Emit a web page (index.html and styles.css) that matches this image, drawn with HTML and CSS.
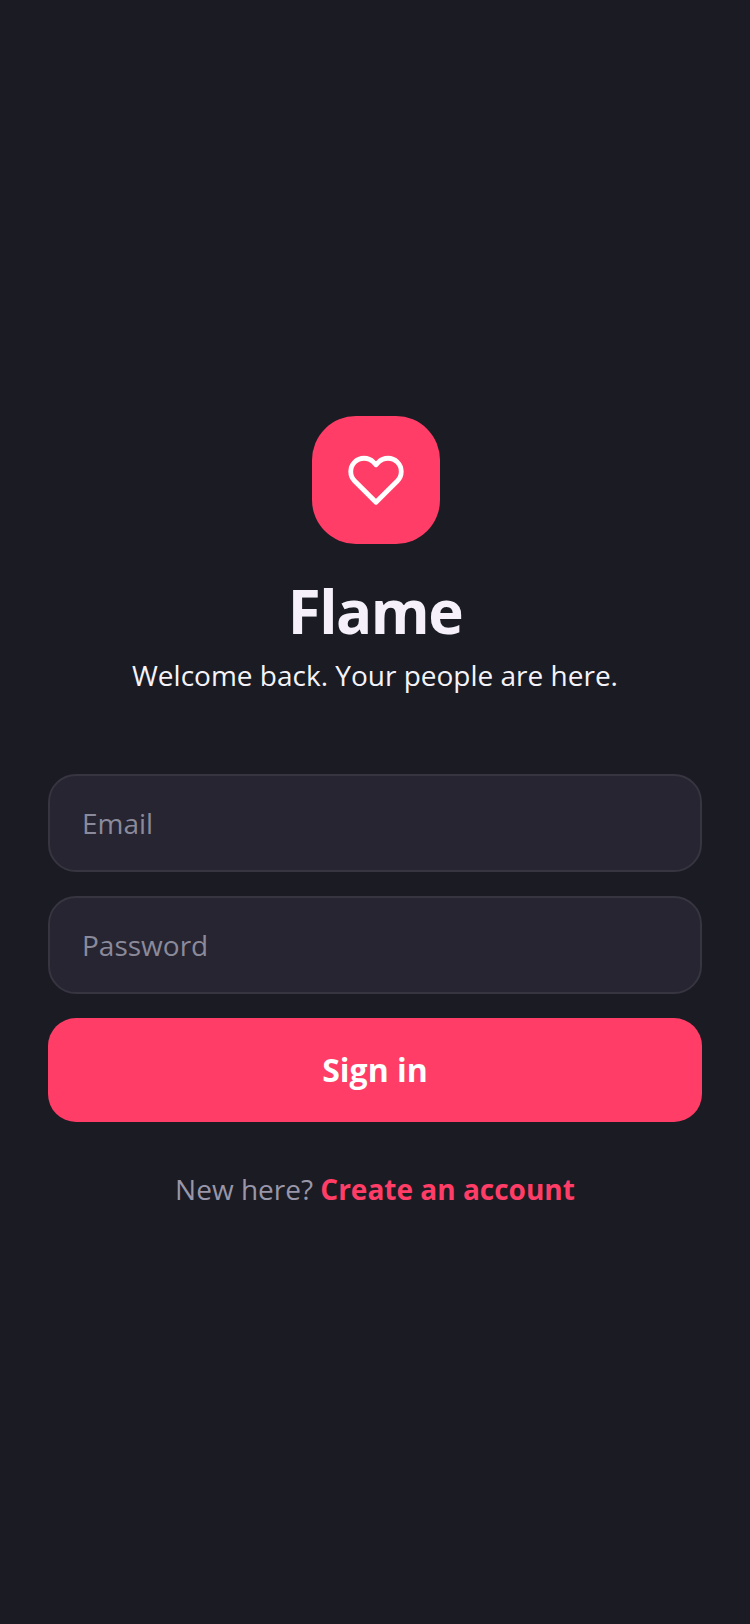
FILE: index.html
```html
<!DOCTYPE html>
<html lang="en">
<head>
    <meta charset="UTF-8">
    <meta name="viewport" content="width=device-width, initial-scale=1.0">
    <title>Flame - Sign in</title>
    <link rel="stylesheet" href="styles.css">
</head>
<body>
    <main class="login">
        <div class="logo">
            <svg class="logo-icon" viewBox="0 0 24 24" fill="none" stroke="#ffffff" stroke-width="2" stroke-linecap="round" stroke-linejoin="round">
                <path d="M20.84 4.61a5.5 5.5 0 0 0-7.78 0L12 5.67l-1.06-1.06a5.5 5.5 0 0 0-7.78 7.78l1.06 1.06L12 21.23l7.78-7.78 1.06-1.06a5.5 5.5 0 0 0 0-7.78z"/>
            </svg>
        </div>
        <h1 class="title">Flame</h1>
        <p class="subtitle">Welcome back. Your people are here.</p>

        <form class="form">
            <input type="email" class="field" placeholder="Email">
            <input type="password" class="field" placeholder="Password">
            <button type="button" class="submit">Sign in</button>
        </form>

        <p class="signup">New here? <a href="#" class="signup-link">Create an account</a></p>
    </main>
</body>
</html>
```
FILE: styles.css
```css
* {
    box-sizing: border-box;
}
body {
    margin: 0;
    min-height: 1624px;
    background: #1a1b23;
    font-family: "Open Sans", sans-serif;
    display: flex;
    justify-content: center;
    align-items: center;
}
.login {
    width: 100%;
    padding: 0 48px;
    display: flex;
    flex-direction: column;
    align-items: center;
}
.logo {
    width: 128px;
    height: 128px;
    margin-left: 2px;
    border-radius: 44px;
    background: #ff3d66;
    display: flex;
    align-items: center;
    justify-content: center;
}
.logo-icon {
    width: 58px;
    height: 58px;
}
.title {
    margin: 27px 0 0;
    font-size: 60px;
    line-height: 80px;
    font-weight: 700;
    letter-spacing: -1.5px;
    color: #f5f0fa;
}
.subtitle {
    margin: 4px 0 0;
    font-size: 28px;
    line-height: 40px;
    color: #f5f3fa;
}
.form {
    width: 100%;
    margin-top: 79px;
    display: flex;
    flex-direction: column;
    gap: 24px;
}
.field {
    width: 100%;
    height: 98px;
    padding: 0 32px;
    background: #262531;
    border: 2px solid #363540;
    border-radius: 28px;
    font-family: inherit;
    font-size: 28px;
    color: #ffffff;
}
.field::placeholder {
    color: #8b8a9b;
    opacity: 1;
}
.submit {
    width: 100%;
    height: 104px;
    padding: 0 0 2px;
    border: none;
    border-radius: 28px;
    background: #ff3d66;
    color: #ffffff;
    font-family: inherit;
    font-size: 32px;
    font-weight: 700;
}
.signup {
    margin: 49px 0 0;
    font-size: 28px;
    line-height: 37px;
    color: #9896a8;
}
.signup-link {
    color: #ff3d66;
    font-weight: 700;
    text-decoration: none;
}
```
